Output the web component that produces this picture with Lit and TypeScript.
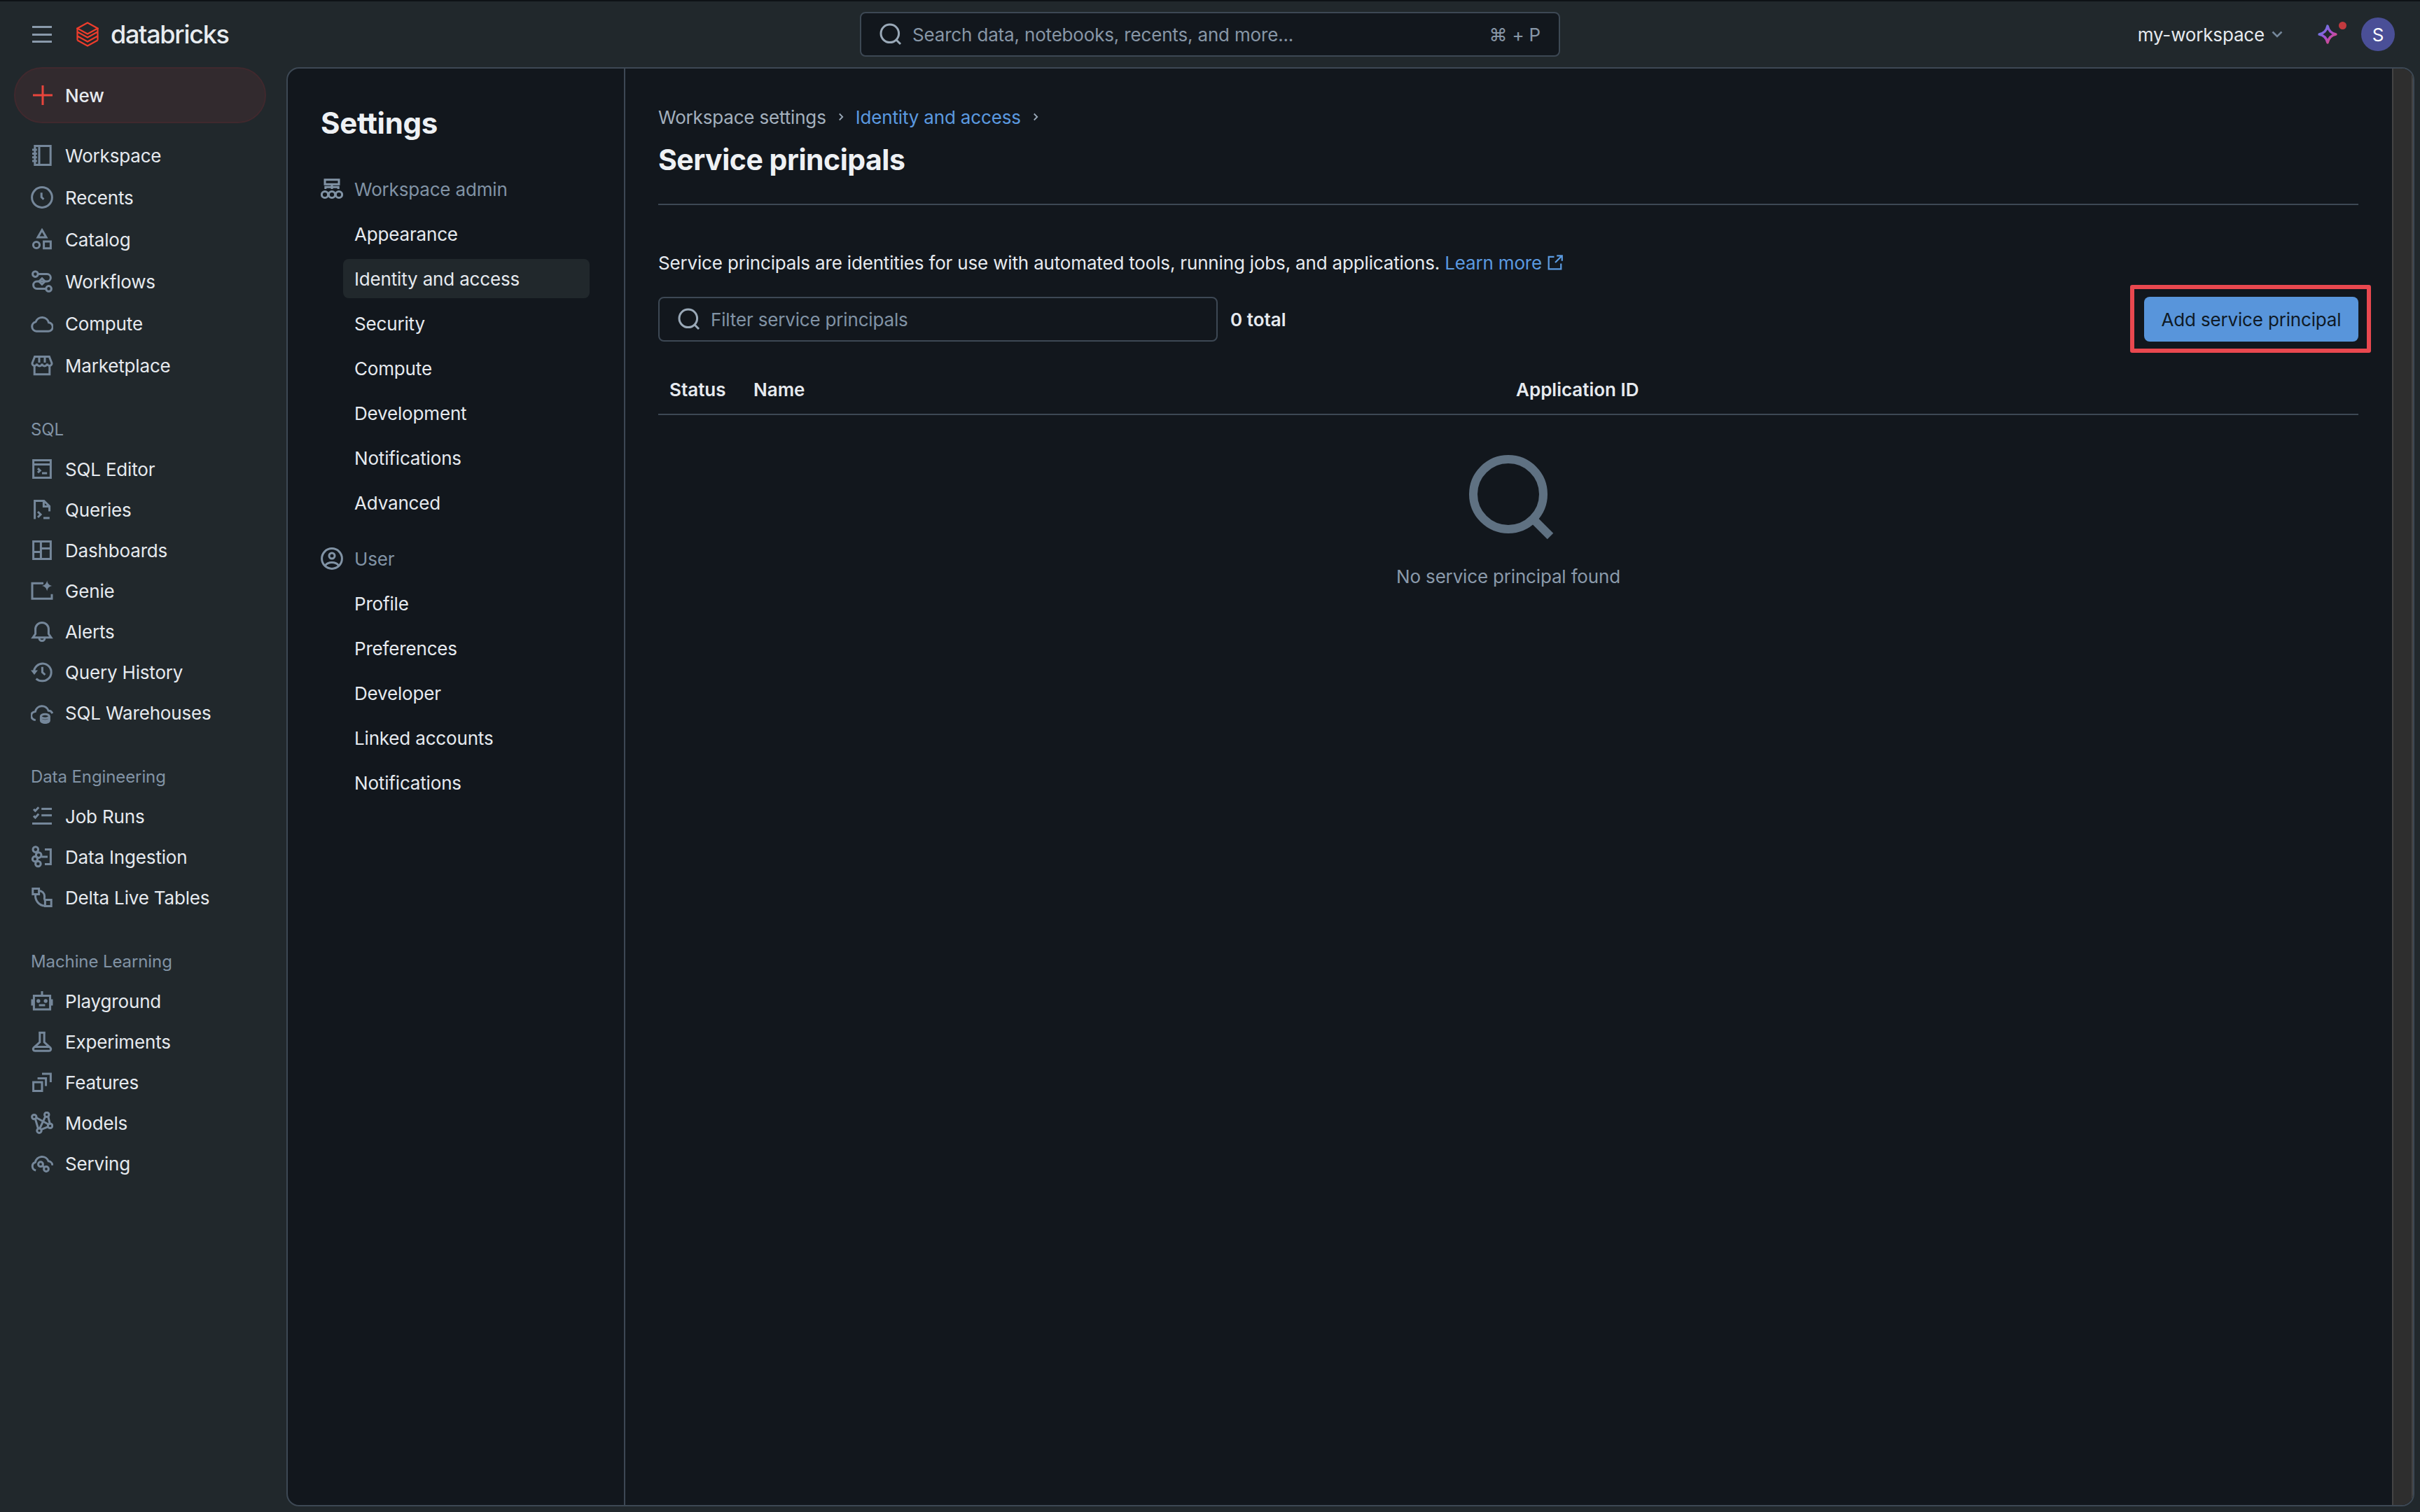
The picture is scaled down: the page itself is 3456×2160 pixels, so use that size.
import { LitElement, html, css, svg } from "lit";
import { customElement } from "lit/decorators.js";

const ICONS: Record<string, unknown> = {
  workspace: svg`<path d="M2.900 1.200h11.200v13.600H2.900zM6 1.200v13.600M1 4h3.400M1 6.700h3.400M1 9.400h3.400M1 12h3.400"/>`,
  recents: svg`<circle cx="8" cy="8" r="7.200"/><path d="M7.600 4.600v3.200l1.600 1.600"/>`,
  catalog: svg`<path d="M8 1.300l3 5.200H5zM9.300 9.500h4.900v4.900H9.300z"/><circle cx="4" cy="12" r="2.300"/>`,
  workflows: svg`<circle cx="3.200" cy="2.800" r="1.900"/><circle cx="12.800" cy="13.200" r="1.900"/><path d="M5 2.800h6.600a2.600 2.600 0 0 1 0 5.200H4.400a2.600 2.600 0 0 0 0 5.200H11"/><path d="M8 5.900L10.100 8 8 10.100 5.900 8z"/>`,
  compute: svg`<path d="M4 13.600h8.200a3.100 3.100 0 0 0 .6-6.200A4.900 4.900 0 0 0 3.500 6.900 3.400 3.400 0 0 0 4 13.600z"/>`,
  marketplace: svg`<path d="M2.600 7.600v6.800h10.800V7.600"/><path d="M2.800 1.800h10.400l1.800 4.600a1.700 1.700 0 0 1-3.400.3 1.800 1.800 0 0 1-3.600 0 1.800 1.800 0 0 1-3.600 0 1.700 1.700 0 0 1-3.400-.3zM6 2v4M10 2v4"/>`,
  sqleditor: svg`<path d="M1.800 1.800h12.400v12.400H1.800zM1.800 4.800h12.400M5 7.600l1.600 1.500L5 10.600M8 11h3.600"/>`,
  queries: svg`<path d="M2.800 14.800V1.800h6.600l3.900 3.800v3.600M9.200 2v3.800h4M5 9.500l2 2-2 2M9 14h4.400"/>`,
  dashboards: svg`<path d="M1.800 1.800h12.400v12.400H1.800zM7.200 1.800v12.400M1.800 9.200h5.400M7.200 6.800h7"/>`,
  genie: svg`<path d="M9 2.600H1v11h14v-3.200"/><path fill="currentColor" stroke="none" d="M11.600 0.600c.4 2.400 1.400 3.400 3.800 3.900-2.400.4-3.400 1.400-3.800 3.800-.5-2.400-1.500-3.400-3.900-3.800 2.400-.5 3.400-1.500 3.900-3.900z"/>`,
  alerts: svg`<path d="M1.500 12.400h13l-1.800-2.600V6.400a4.700 4.700 0 0 0-9.400 0v3.400z"/><path d="M6 12.800a2 2 0 0 0 4 0"/>`,
  history: svg`<path d="M2.200 8A6.200 6.200 0 1 1 8 14.400a6.200 6.200 0 0 1-4.200-1.600"/><path fill="currentColor" stroke="none" d="M0 6.800h5L2.500 10z"/><path d="M8.200 4.400v3.800l2 1.800"/>`,
  warehouses: svg`<path d="M3.400 13.200A3 3 0 0 1 3.200 7.200 4.900 4.900 0 0 1 12.600 6.600a3 3 0 0 1 2.800 2"/><ellipse cx="10.200" cy="10.600" rx="3" ry="1.500"/><path d="M7.200 10.600v3.200c0 .8 1.300 1.500 3 1.500s3-.7 3-1.500v-3.200M7.200 12.400c0 .8 1.300 1.500 3 1.500s3-.7 3-1.500"/>`,
  jobruns: svg`<path d="M2 3l1.200 1.200L5.600 1.600M2 7.800L3.200 9l2.400-2.600M7.600 2.800H15M7.600 7.400H15M1 13.200h14"/>`,
  ingestion: svg`<circle cx="3.400" cy="2.800" r="1.900"/><circle cx="5.600" cy="6.800" r="1.900"/><circle cx="3" cy="9.600" r="1.800"/><circle cx="5.200" cy="13" r="1.900"/><path d="M10 2.800h4.200v10.400H10M7.600 8H12"/>`,
  dlt: svg`<path d="M1.400 1.800h4.400v4H1.400zM10.200 9.800h4.400v4.400h-4.400z"/><path d="M5.800 3.200a4 4 0 0 1 4 4v.2a4 4 0 0 0 .4 3M3.400 5.800a7 7 0 0 0 6.800 8.200"/>`,
  playground: svg`<path d="M2.200 4.200h11.600v9.800H2.200zM8 1v3.200M1 6.800v4.400M15 6.800v4.400M5.800 11h4.400"/><circle cx="5.400" cy="8" r=".6" fill="currentColor"/><circle cx="10.600" cy="8" r=".6" fill="currentColor"/>`,
  experiments: svg`<path d="M5.600 1.600h4.800M6.400 1.600v6.800L2 12.400c-.8 1-.2 2.200 1 2.200h10c1.200 0 1.800-1.200 1-2.200l-4.400-4V1.600M2.600 11.800h10.800"/>`,
  features: svg`<path d="M1.800 8h6.200v6.200H1.800zM4.800 5.200h6v5.600M8 2h6.200v6"/>`,
  models: svg`<circle cx="2.400" cy="3.800" r="1.600"/><circle cx="11.400" cy="2.200" r="1.600"/><circle cx="13.800" cy="10.200" r="1.600"/><circle cx="6" cy="13.600" r="1.600"/><path d="M4 4.400l8.400 4.600M10.400 3.400L6.400 12M3.200 5.200L5.200 12M12.400 3.600l1.200 5M7.400 12.800l5-2"/>`,
  serving: svg`<path d="M3.600 13A3 3 0 0 1 3.200 7.200 4.900 4.900 0 0 1 12.600 6.400a3 3 0 0 1 2.800 3"/><circle cx="7" cy="8.600" r="1.700"/><circle cx="11" cy="12" r="1.700"/><path d="M8.200 9.800l1.600 1"/>`,
  admin: svg`<path d="M3 1.400h10v3.200H3zM8 4.600v3.400M3.400 8V6.600h9.200V8"/><circle cx="3" cy="12" r="2.300"/><circle cx="8" cy="12" r="2.300"/><circle cx="13" cy="12" r="2.300"/>`,
  user: svg`<circle cx="8" cy="8" r="7.200"/><circle cx="8" cy="6" r="2"/><path d="M3.200 13c1-1.400 2.800-2.200 4.800-2.200s3.800.8 4.800 2.200"/>`,
};

const SIDEBAR = [
  { label: "", items: [["workspace","Workspace"],["recents","Recents"],["catalog","Catalog"],["workflows","Workflows"],["compute","Compute"],["marketplace","Marketplace"]] },
  { label: "SQL", items: [["sqleditor","SQL Editor"],["queries","Queries"],["dashboards","Dashboards"],["genie","Genie"],["alerts","Alerts"],["history","Query History"],["warehouses","SQL Warehouses"]] },
  { label: "Data Engineering", items: [["jobruns","Job Runs"],["ingestion","Data Ingestion"],["dlt","Delta Live Tables"]] },
  { label: "Machine Learning", items: [["playground","Playground"],["experiments","Experiments"],["features","Features"],["models","Models"],["serving","Serving"]] },
];

const SETTINGS = [
  { icon: "admin", label: "Workspace admin", items: ["Appearance","Identity and access","Security","Compute","Development","Notifications","Advanced"] },
  { icon: "user", label: "User", items: ["Profile","Preferences","Developer","Linked accounts","Notifications"] },
];

const icon = (n: string) => html`<svg class="ic" viewBox="0 0 16 16" fill="none" stroke="currentColor" stroke-width="1.5">${ICONS[n]}</svg>`;

@customElement("app-root")
export class AppRoot extends LitElement {
  static styles = css`
    :host { display: block; width: 3456px; height: 2160px; overflow: hidden; background: #21282c; font-family: Inter, "Noto Sans", sans-serif; font-size: 26px; letter-spacing: -0.17px; color: #e6eaef; box-sizing: border-box; }
    * { box-sizing: border-box; }
    .top { height: 96px; display: grid; grid-template-columns: 1fr 1000px 1fr; align-items: center; border-top: 2px solid #0e1216; }
    .brand { display: flex; align-items: center; padding-left: 46px; }
    .burger { width: 28px; height: 24px; display: flex; flex-direction: column; justify-content: space-between; margin-right: 35px; }
    .burger i { display: block; height: 3px; background: #8a9aab; }
    .logo { width: 32px; height: 36px; margin-right: 17px; }
    .wordmark { font-size: 36px; font-weight: 500; letter-spacing: -1.3px; color: #e8ecf0; line-height: 1; }
    .search { height: 64px; border: 2px solid #3d4854; border-radius: 8px; background: #12171d; display: flex; align-items: center; padding: 0 26px; color: #8796a6; }
    .search svg { width: 32px; height: 32px; margin-right: 15px; color: #9aa9b8; }
    .search .hint { margin-left: auto; }
    .tools { display: flex; align-items: center; justify-content: flex-end; padding-right: 36px; }
    .ws { margin-right: 10px; }
    .chev { width: 16px; height: 10px; color: #75879a; margin-right: 50px; }
    .spark { width: 28px; height: 28px; margin-right: 34px; position: relative; }
    .spark svg { width: 28px; height: 28px; display: block; }
    .spark b { position: absolute; width: 11px; height: 11px; background: #c23a3f; border-radius: 50%; left: 30px; top: -4px; }
    .avatar { width: 48px; height: 48px; border-radius: 50%; background: #4a4f97; display: flex; align-items: center; justify-content: center; color: #fff; font-size: 26px; }
    .body { display: flex; height: 2062px; }
    .side { width: 409px; flex: none; }
    .new { width: 360px; height: 80px; margin: 0 0 16px 20px; border: 2px solid #40292e; border-radius: 40px; background: #322a2e; display: flex; align-items: center; padding-left: 23px; font-weight: 500; }
    .new svg { width: 32px; height: 32px; margin-right: 16px; color: #e8453c; }
    .row { display: flex; align-items: center; padding-left: 44px; gap: 17px; }
    .ic { width: 32px; height: 32px; flex: none; color: #75879a; display: block; }
    .group { margin-bottom: 43px; }
    .group .row { height: 58px; }
    .group.first .row { height: 60px; }
    .group.first { margin-bottom: 42px; }
    .cap { height: 38px; padding-left: 44px; display: flex; align-items: center; color: #8193a5; font-size: 24px; letter-spacing: -0.1px; margin-bottom: 9px; }
    .panel { flex: 1; margin: 0 8px 6px 0; border: 2px solid #3d4854; border-radius: 18px; background: #12171d; display: flex; overflow: hidden; }
    .settings { width: 482px; flex: none; border-right: 2px solid #3d4854; padding: 50px 49px 0 47px; }
    .settings h1 { font-size: 42px; line-height: 56px; font-weight: 700; margin: 0 0 38px; color: #eef1f4; letter-spacing: -0.3px; }
    .shead { height: 56px; display: flex; align-items: center; gap: 16px; color: #8193a5; margin-bottom: 8px; }
    .shead .ic { color: #8193a5; }
    .sitem { height: 56px; margin: 0 0 8px 32px; padding-left: 16px; border-radius: 8px; display: flex; align-items: center; }
    .sitem.on { background: #21282c; }
    .sgroup { margin-bottom: 24px; }
    .main { flex: 1; padding: 49px 48px 0 47px; min-width: 0; }
    .crumb { height: 40px; display: flex; align-items: center; color: #a3b0bd; margin-bottom: 13px; }
    .crumb a { color: #5b9ae0; }
    .crumb svg { width: 14px; height: 18px; margin: 0 14px; color: #9aa9b8; }
    h2 { font-size: 41px; line-height: 56px; font-weight: 700; margin: 0 0 35px; color: #eef1f4; letter-spacing: -0.5px; }
    .rule { height: 2px; background: #3d4854; }
    .desc { margin-top: 62px; height: 40px; display: flex; align-items: center; white-space: pre; }
    .desc a { color: #5b9ae0; }
    .desc svg { width: 24px; height: 24px; margin-left: 7px; color: #5b9ae0; }
    .bar { margin-top: 29px; height: 64px; display: flex; align-items: center; }
    .filter { width: 799px; height: 64px; border: 2px solid #3d4854; border-radius: 8px; display: flex; align-items: center; padding-left: 26px; color: #8193a5; }
    .filter svg { width: 32px; height: 32px; margin-right: 15px; color: #9aa9b8; }
    .count { margin-left: 18px; font-weight: 600; letter-spacing: 0; }
    .btn { margin-left: auto; width: 306px; height: 64px; border-radius: 8px; background: #5895db; color: #0f1a26; display: flex; align-items: center; justify-content: center; position: relative; }
    .mark { position: absolute; left: -20px; right: -18px; top: -17px; bottom: -16px; border: 6px solid #e9484f; border-radius: 3px; }
    .thead { margin-top: 34px; height: 71px; display: grid; grid-template-columns: 120px 1089px 1fr; align-items: center; padding-left: 16px; border-bottom: 2px solid #3d4854; font-weight: 600; letter-spacing: 0; }
    .empty { display: flex; flex-direction: column; align-items: center; padding-top: 43px; }
    .empty svg { width: 140px; height: 140px; color: #5f7182; display: block; margin-bottom: 27px; }
    .empty span { height: 40px; display: flex; align-items: center; color: #8a9aab; }
    .track { width: 30px; flex: none; background: #2e2e2e; border-left: 2px solid #444; border-right: 2px solid #444; }
  `;

  private lens() {
    return html`<svg viewBox="0 0 16 16" fill="none" stroke="currentColor" stroke-width="1.5"><circle cx="7.400" cy="7.400" r="6.400"/><path d="M11.900 11.900L15 15"/></svg>`;
  }

  render() {
    return html`
      <header class="top">
        <div class="brand">
          <div class="burger"><i></i><i></i><i></i></div>
          <svg class="logo" viewBox="0 0 32 36" fill="none" stroke="#ee3d2c" stroke-width="2.2"><path d="M16 1.500L30.500 9.500 16 17.500 1.500 9.500z"/><path d="M1.500 14.500L16 22.500l14.500-8M1.500 20.500L16 28.500l14.500-8M1.500 26.500L16 34.500l14.500-8M1.500 9.500v17M30.500 9.500v17"/></svg>
          <span class="wordmark">databricks</span>
        </div>
        <div class="search">${this.lens()}<span>Search data, notebooks, recents, and more...</span><span class="hint">⌘ + P</span></div>
        <div class="tools">
          <span class="ws">my-workspace</span>
          <svg class="chev" viewBox="0 0 16 10" fill="none" stroke="currentColor" stroke-width="2.5"><path d="M1.500 1.500L8 8l6.500-6.500"/></svg>
          <div class="spark">
            <svg viewBox="0 0 16 16" fill="none" stroke-width="2"><defs><linearGradient id="g" x1="0" y1="0" x2="1" y2="1"><stop offset="0" stop-color="#4f8fe8"/><stop offset=".5" stop-color="#a24fd6"/><stop offset="1" stop-color="#f0475c"/></linearGradient></defs><path stroke="url(#g)" stroke-linejoin="round" d="M8 1.200c.8 3.800 3 6 6.800 6.800-3.800.8-6 3-6.800 6.800-.8-3.800-3-6-6.800-6.800 3.800-.8 6-3 6.800-6.800z"/></svg>
            <b></b>
          </div>
          <div class="avatar">S</div>
        </div>
      </header>
      <div class="body">
        <nav class="side">
          <div class="new"><svg viewBox="0 0 16 16" fill="none" stroke="currentColor" stroke-width="1.5"><path d="M8 1v14M1 8h14"/></svg>New</div>
          ${SIDEBAR.map((g) => html`
            <div class="group ${g.label ? "" : "first"}">
              ${g.label ? html`<div class="cap">${g.label}</div>` : null}
              ${g.items.map(([i, t]) => html`<div class="row">${icon(i)}<span>${t}</span></div>`)}
            </div>`)}
        </nav>
        <section class="panel">
          <div class="settings">
            <h1>Settings</h1>
            ${SETTINGS.map((g) => html`
              <div class="sgroup">
                <div class="shead">${icon(g.icon)}<span>${g.label}</span></div>
                ${g.items.map((t) => html`<div class="sitem ${t === "Identity and access" ? "on" : ""}">${t}</div>`)}
              </div>`)}
          </div>
          <div class="main">
            <div class="crumb">
              <span>Workspace settings</span>
              <svg viewBox="0 0 12 16" fill="none" stroke="currentColor" stroke-width="1.6"><path d="M4 4l4 4-4 4"/></svg>
              <a>Identity and access</a>
              <svg viewBox="0 0 12 16" fill="none" stroke="currentColor" stroke-width="1.6"><path d="M4 4l4 4-4 4"/></svg>
            </div>
            <h2>Service principals</h2>
            <div class="rule"></div>
            <div class="desc"><span>Service principals are identities for use with automated tools, running jobs, and applications. </span><a>Learn more</a><svg viewBox="0 0 16 16" fill="none" stroke="currentColor" stroke-width="1.5"><path d="M7 2.500H1.800v11.700h11.700V9M9.500 1.500h5v5M14.500 1.500L8 8"/></svg></div>
            <div class="bar">
              <div class="filter">${this.lens()}<span>Filter service principals</span></div>
              <span class="count">0 total</span>
              <div class="btn">Add service principal<div class="mark"></div></div>
            </div>
            <div class="thead"><span>Status</span><span>Name</span><span>Application ID</span></div>
            <div class="empty">
              <svg viewBox="0 0 140 140" fill="none" stroke="currentColor" stroke-width="12"><circle cx="70" cy="70" r="50"/><path d="M106 106l24 24"/></svg>
              <span>No service principal found</span>
            </div>
          </div>
          <div class="track"></div>
        </section>
      </div>
    `;
  }
}
